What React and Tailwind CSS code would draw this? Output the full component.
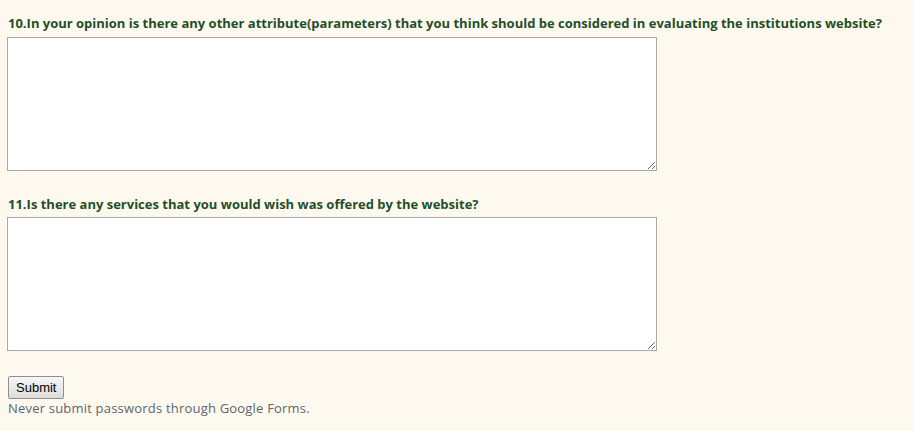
export default function App() {
  return (
    <div className="min-h-[431px] bg-[#fef9ee] px-2 pt-[14px] font-['Open_Sans','Liberation_Sans',sans-serif]">
      <div className="text-[13px] font-bold leading-[18px] text-[#1f4f2a]">
        10.In your opinion is there any other attribute(parameters) that you think should be considered in evaluating the institutions website?
      </div>
      <textarea className="mt-[5px] -ml-px block h-[134px] w-[650px] border border-[#a9a9a9] bg-white" />

      <div className="mt-[24px] text-[13px] font-bold leading-[18px] text-[#1f4f2a]">
        11.Is there any services that you would wish was offered by the website?
      </div>
      <textarea className="mt-[4px] -ml-px block h-[134px] w-[650px] border border-[#a9a9a9] bg-white" />

      <button className="mt-[25px] block h-[23px] rounded-[2px] border border-[#8f8f8f] bg-gradient-to-b from-[#f6f6f6] to-[#dddddd] px-[7px] text-[13px] leading-none text-black font-['Liberation_Sans',sans-serif]">
        Submit
      </button>
      <div className="text-[13px] leading-[18px] tracking-[0.2px] text-[#5b6670]">
        Never submit passwords through Google Forms.
      </div>
    </div>
  )
}
